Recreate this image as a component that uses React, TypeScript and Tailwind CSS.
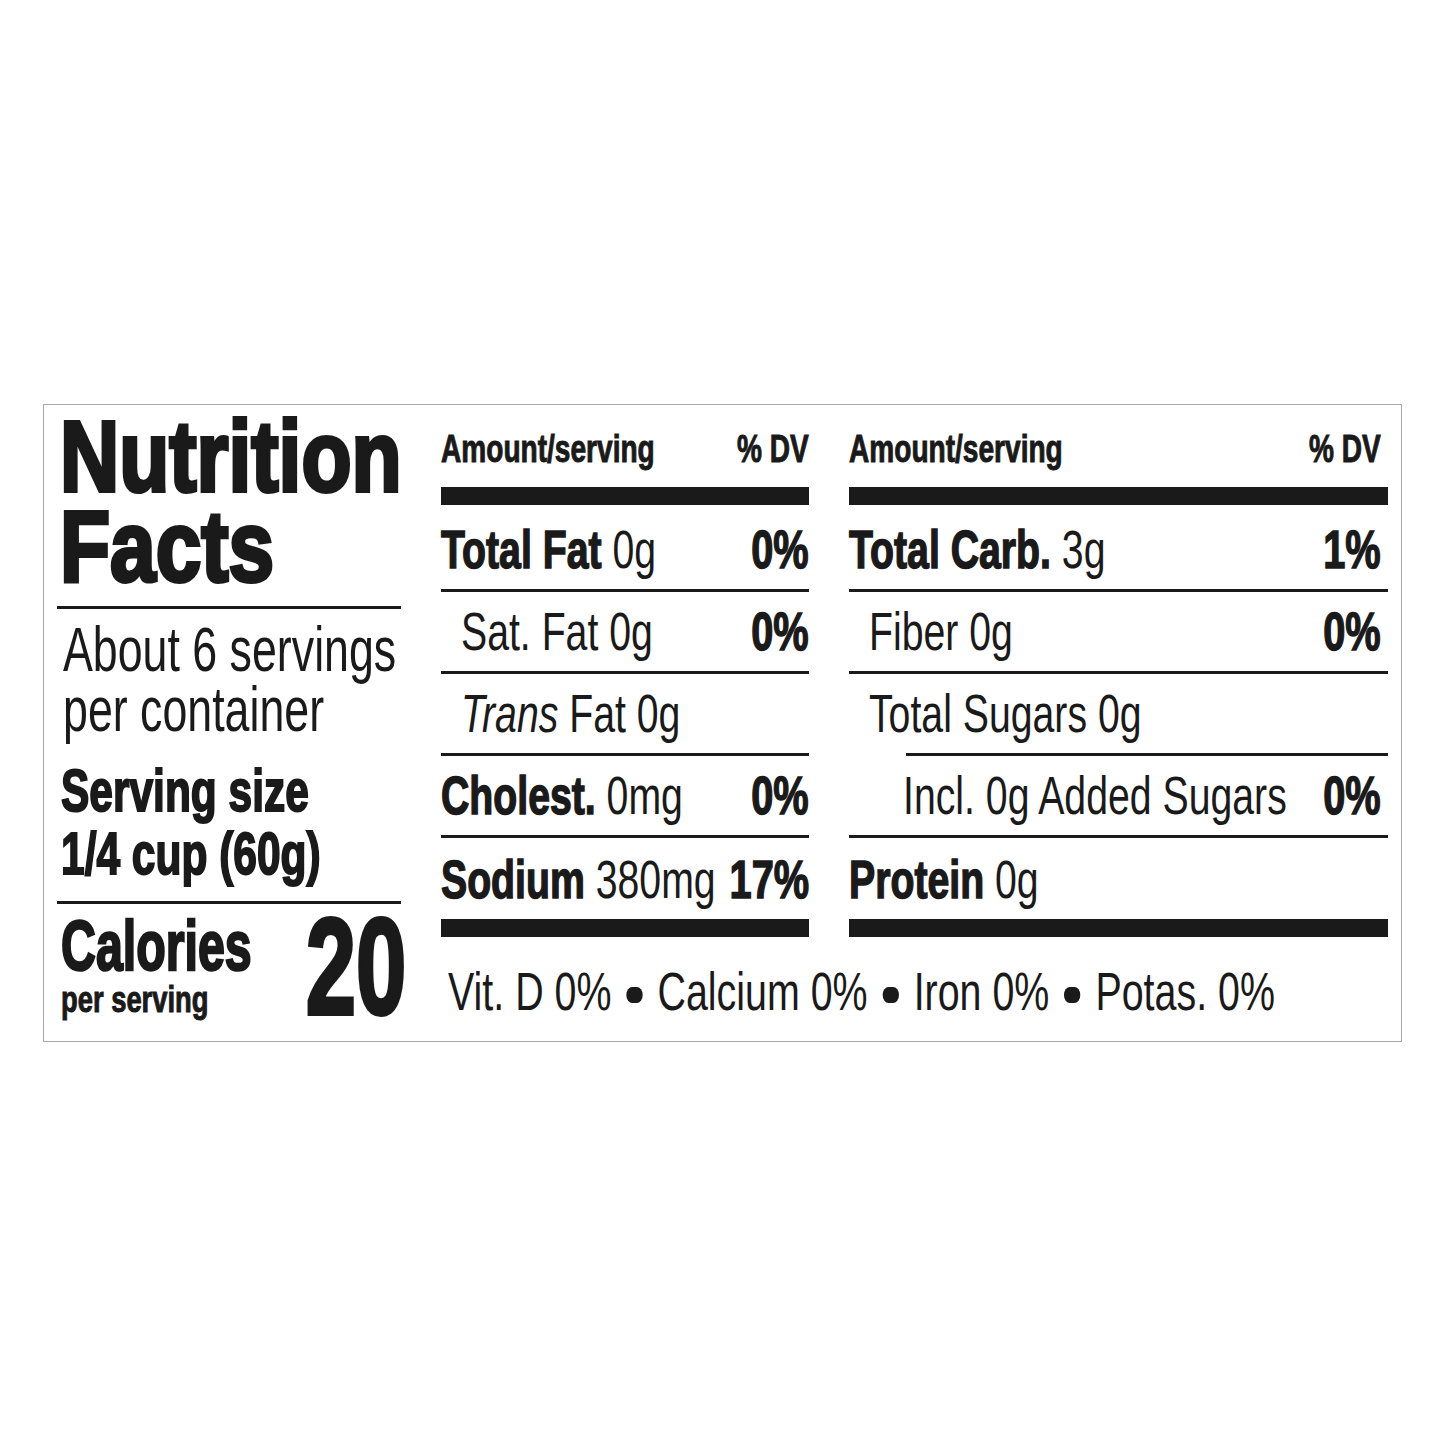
import React from 'react';

// condensed look: Liberation Sans squeezed horizontally, bold weights thickened a little
const bar = 'bg-[#1a1a1a]';

function Line({ indent }: { indent?: boolean }) {
    return <div className={indent ? 'ml-[57px] h-[3px] bg-[#1a1a1a]' : 'h-[3px] bg-[#1a1a1a]'} />;
}

function Bold({ children }: { children: React.ReactNode }) {
    return <span className="font-bold [-webkit-text-stroke:1.5px_#1a1a1a]">{children}</span>;
}

function Row({ className, label, dv }: { className: string; label: React.ReactNode; dv?: string }) {
    return (
        <div className={'flex items-end justify-between pb-[13px] text-[53px] leading-[53px] ' + className}>
            <span className="block min-w-0 origin-left scale-x-[0.74] whitespace-nowrap">{label}</span>
            {dv && (
                <span className="block shrink-0 origin-right scale-x-[0.75] whitespace-nowrap font-bold [-webkit-text-stroke:1.5px_#1a1a1a]">
                    {dv}
                </span>
            )}
        </div>
    );
}

function Header({ className }: { className: string }) {
    return (
        <div className={'flex h-[82px] justify-between pt-[24px] text-[39px] leading-[40px] font-bold [-webkit-text-stroke:1px_#1a1a1a] ' + className}>
            <span className="block min-w-0 origin-left scale-x-[0.72] whitespace-nowrap">Amount/serving</span>
            <span className="block shrink-0 origin-right scale-x-[0.72] whitespace-nowrap">% DV</span>
        </div>
    );
}

function LeftPanel() {
    return (
        <div className="flex w-[344px] shrink-0 flex-col">
            <h1 className="pl-[3px] pt-[6px] text-[100px] leading-[90px] font-bold [-webkit-text-stroke:4px_#1a1a1a]">
                <span className="block origin-left scale-x-[0.82] whitespace-nowrap">Nutrition</span>
                <span className="block origin-left scale-x-[0.82] whitespace-nowrap">Facts</span>
            </h1>
            <div className="mt-[15px]">
                <Line />
            </div>
            <div className="mt-[10px] pl-[6px] text-[63px] leading-[60px]">
                <span className="block origin-left scale-x-[0.71] whitespace-nowrap">About 6 servings</span>
                <span className="block origin-left scale-x-[0.71] whitespace-nowrap">per container</span>
            </div>
            <div className="mt-[21px] pl-[4px] text-[59px] leading-[63px] font-bold [-webkit-text-stroke:2px_#1a1a1a]">
                <span className="block origin-left scale-x-[0.72] whitespace-nowrap">Serving size</span>
                <span className="block origin-left scale-x-[0.72] whitespace-nowrap">1/4 cup (60g)</span>
            </div>
            <div className="mt-[15px]">
                <Line />
            </div>
            <div className="flex justify-between font-bold">
                <div className="min-w-0 pl-[4px]">
                    <span className="mt-[12px] block origin-left scale-x-[0.69] whitespace-nowrap text-[70px] leading-[60px] [-webkit-text-stroke:2.5px_#1a1a1a]">
                        Calories
                    </span>
                    <span className="mt-[3px] block origin-left scale-x-[0.76] whitespace-nowrap text-[36px] leading-[42px] [-webkit-text-stroke:1px_#1a1a1a]">
                        per serving
                    </span>
                </div>
                <span className="-mr-[5px] mt-[8px] block shrink-0 origin-right scale-x-[0.66] text-[137px] leading-[110px] [-webkit-text-stroke:4px_#1a1a1a]">
                    20
                </span>
            </div>
        </div>
    );
}

function Dot() {
    return <span className="mx-[20px] mb-[7px] inline-block h-[16px] w-[22px] rounded-full bg-[#1a1a1a]" />;
}

export default function App() {
    return (
        <div className="min-h-[1445px] w-full overflow-hidden bg-white pl-[43px] pt-[404px] font-['Liberation_Sans',Arial,sans-serif] text-[#1a1a1a]">
            <div className="flex h-[638px] w-[1359px] overflow-hidden border border-[#a8a8a8] pl-[13px]">
                <LeftPanel />

                <div className="ml-[40px] flex min-w-0 flex-col">
                    <div className="flex gap-[40px]">
                        <div className="flex w-[368px] flex-col">
                            <Header className="" />
                            <div className={'h-[18px] ' + bar} />
                            <Row className="h-[84px]" label={<><Bold>Total Fat</Bold> 0g</>} dv="0%" />
                            <Line />
                            <Row className="h-[79px] pl-[20px]" label="Sat. Fat 0g" dv="0%" />
                            <Line />
                            <Row className="h-[79px] pl-[20px]" label={<><i>Trans</i> Fat 0g</>} />
                            <Line />
                            <Row className="h-[79px]" label={<><Bold>Cholest.</Bold> 0mg</>} dv="0%" />
                            <Line />
                            <Row className="h-[81px]" label={<><Bold>Sodium</Bold> 380mg</>} dv="17%" />
                            <div className={'h-[18px] ' + bar} />
                        </div>

                        <div className="flex w-[539px] flex-col">
                            <Header className="pr-[7px]" />
                            <div className={'h-[18px] ' + bar} />
                            <Row className="h-[84px] pr-[7px]" label={<><Bold>Total Carb.</Bold> 3g</>} dv="1%" />
                            <Line />
                            <Row className="h-[79px] pl-[20px] pr-[7px]" label="Fiber 0g" dv="0%" />
                            <Line />
                            <Row className="h-[79px] pl-[20px] pr-[7px]" label="Total Sugars 0g" />
                            <Line indent />
                            <Row className="h-[79px] pl-[54px] pr-[7px]" label="Incl. 0g Added Sugars" dv="0%" />
                            <Line />
                            <Row className="h-[81px] pr-[7px]" label={<><Bold>Protein</Bold> 0g</>} />
                            <div className={'h-[18px] ' + bar} />
                        </div>
                    </div>

                    <div className="mt-[28px] w-[947px] overflow-hidden pl-[7px] text-[53px] leading-[53px]">
                        <span className="inline-block origin-left scale-x-[0.743] whitespace-nowrap">
                            Vit. D 0%<Dot />Calcium 0%<Dot />Iron 0%<Dot />Potas. 0%
                        </span>
                    </div>
                </div>
            </div>
        </div>
    );
}
